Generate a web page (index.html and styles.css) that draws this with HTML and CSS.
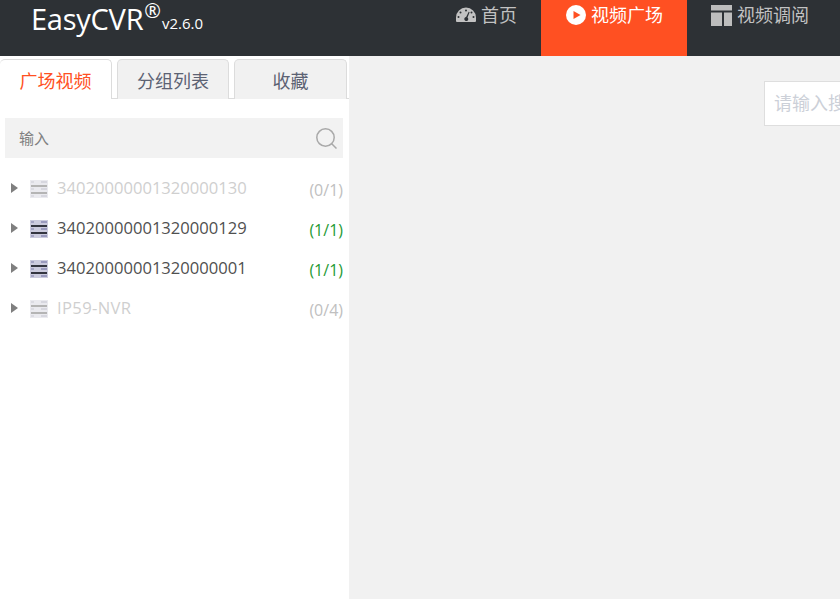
FILE: index.html
```html
<!DOCTYPE html>
<html lang="zh-CN">
<head>
<meta charset="utf-8">
<title>EasyCVR</title>
<link rel="stylesheet" href="styles.css">
</head>
<body>
<svg class="defs" width="0" height="0" aria-hidden="true">
  <symbol id="server" viewBox="0 0 18 18">
    <rect width="18" height="18" fill="currentColor" opacity=".35"/>
    <rect x="1" y="1.500" width="3" height="1" fill="currentColor" opacity=".8"/>
    <rect x="11" y="1.500" width="6" height="1" fill="currentColor"/>
    <rect x="1" y="5" width="16" height="2" fill="var(--bar)"/>
    <rect x="1" y="8.500" width="3" height="1" fill="currentColor" opacity=".8"/>
    <rect x="11" y="8.500" width="6" height="1" fill="currentColor"/>
    <rect x="1" y="12" width="16" height="2" fill="var(--bar)"/>
    <rect x="1" y="15.500" width="3" height="1" fill="currentColor" opacity=".8"/>
    <rect x="11" y="15.500" width="6" height="1" fill="currentColor"/>
  </symbol>
</svg>
<header class="topbar">
  <div class="brand"><span class="brand-name">EasyCVR</span><sup class="brand-reg">®</sup><span class="brand-ver">v2.6.0</span></div>
  <nav class="nav">
    <a class="nav-item">
      <svg class="nav-icon" width="20" height="18" viewBox="0 0 20 18"><path fill="#c2c2c2" fill-rule="evenodd" d="M10 2.500A10 10 0 0 0 0 12.500V16a1 1 0 0 0 1 1h18a1 1 0 0 0 1-1v-3.500A10 10 0 0 0 10 2.500zM10 4.500a1 1 0 1 1 0 2 1 1 0 0 1 0-2zM4.500 6.500a1 1 0 1 1 0 2 1 1 0 0 1 0-2zM15.500 6.500a1 1 0 1 1 0 2 1 1 0 0 1 0-2zM2.500 11a1 1 0 1 1 0 2 1 1 0 0 1 0-2zM17.500 11a1 1 0 1 1 0 2 1 1 0 0 1 0-2zM12.700 6.800l.9.500-2.100 5.200a2 2 0 1 1-1.400-.4z"/></svg>
      首页
    </a>
    <a class="nav-item nav-active">
      <svg class="nav-icon" width="20" height="20" viewBox="0 0 20 20"><circle cx="10" cy="10" r="10" fill="#fff"/><path fill="#ff5022" d="M7.500 6v8l7-4z"/></svg>
      视频广场
    </a>
    <a class="nav-item">
      <svg class="nav-icon" width="21" height="21" viewBox="0 0 21 21"><path fill="#bdbdbd" d="M0 0h21v5.500H0zM0 7.500h11V21H0zM13 7.500h8V21h-8z"/></svg>
      视频调阅
    </a>
  </nav>
</header>
<main class="layout">
  <aside class="sidebar">
    <div class="tabs">
      <div class="tab tab-active">广场视频</div>
      <div class="tab">分组列表</div>
      <div class="tab tab-last">收藏</div>
    </div>
    <div class="search">
      <span class="search-text">输入</span>
      <svg width="21" height="21" viewBox="0 0 21 21" fill="none" stroke="#a9a9a9" stroke-width="1.500"><circle cx="9.500" cy="9.500" r="8.700"/><path d="m15.700 15.700 4.800 4.800"/></svg>
    </div>
    <ul class="tree">
      <li class="node node-off"><i class="caret"></i><svg class="server"><use href="#server"/></svg><span class="node-name">34020000001320000130</span><span class="node-count">(0/1)</span></li>
      <li class="node node-on"><i class="caret"></i><svg class="server"><use href="#server"/></svg><span class="node-name">34020000001320000129</span><span class="node-count">(1/1)</span></li>
      <li class="node node-on"><i class="caret"></i><svg class="server"><use href="#server"/></svg><span class="node-name">34020000001320000001</span><span class="node-count">(1/1)</span></li>
      <li class="node node-off"><i class="caret"></i><svg class="server"><use href="#server"/></svg><span class="node-name node-name-wide">IP59-NVR</span><span class="node-count">(0/4)</span></li>
    </ul>
  </aside>
  <section class="content">
    <div class="query">请输入搜索内容</div>
  </section>
</main>
</body>
</html>
```
FILE: styles.css
```css
* { box-sizing: border-box; }
html, body { margin: 0; height: 100%; overflow: hidden; }
body {
  display: flex;
  flex-direction: column;
  font-family: "Open Sans", "Noto Sans CJK SC", sans-serif;
  background: #f1f1f1;
}
.defs { position: absolute; }
.topbar {
  flex: 0 0 56px;
  display: flex;
  background: #2d3135;
  color: #fff;
}
.brand { margin-left: 31px; white-space: nowrap; height: 56px; line-height: 37px; }
.brand-name { font-size: 29px; letter-spacing: -.25px; }
.brand-reg { font-size: 20px; line-height: 0; vertical-align: 12px; margin-left: 1px; }
.brand-ver { font-size: 15px; margin-left: 1px; vertical-align: 1px; }
.nav { margin-left: auto; margin-right: 7px; display: flex; }
.nav-item {
  display: flex;
  align-items: flex-start;
  gap: 5px;
  padding: 0 24px;
  font-size: 18px;
  line-height: 30px;
  color: #c2c2c2;
}
.nav-active { background: #ff5022; color: #fff; padding-left: 25px; }
.nav-icon { margin-top: 5px; flex: none; }
.layout { flex: 1; display: flex; min-height: 0; }
.sidebar { flex: 0 0 349px; min-width: 0; background: #fff; }
.tabs {
  display: flex;
  gap: 5px;
  height: 43px;
  padding-top: 3px;
  padding-right: 2px;
  border-bottom: 1px solid #dcdcdc;
}
.tab {
  width: 112px;
  height: 40px;
  border: 1px solid #dcdcdc;
  border-bottom: 0;
  border-radius: 5px 5px 0 0;
  background: #f1f1f1;
  color: #5c6273;
  font-size: 18px;
  line-height: 42px;
  text-align: center;
}
.tab-active {
  background: #fff;
  color: #ff5022;
  border-left: 0;
}
.tab-last { width: 113px; }
.search {
  margin: 19px 6px 0 5px;
  height: 40px;
  background: #f2f2f2;
  display: flex;
  align-items: center;
  justify-content: space-between;
  padding: 0 6px 0 14px;
}
.search-text { font-size: 15px; color: #808080; padding-bottom: 2px; }
.tree { list-style: none; margin: 10px 6px 0 0; padding: 0; }
.node { display: flex; align-items: center; height: 40px; font-size: 16.600px; }
.caret {
  width: 0;
  height: 0;
  margin-left: 11px;
  border-left: 7px solid #7f7f7f;
  border-top: 5.500px solid transparent;
  border-bottom: 5.500px solid transparent;
}
.server { width: 18px; height: 18px; margin: 2px 0 0 12px; flex: none; }
.node-name { margin: 0 0 2px 9px; }
.node-name-wide { letter-spacing: .35px; }
.node-count { margin-left: auto; font-size: 16px; padding-top: 3px; }
.node-off { color: #cfcfcf; --bar: #b4b4b4; }
.node-off .server { color: #c4c4d0; }
.node-off .node-count { color: #c0c0c0; }
.node-on { color: #505050; --bar: #33353f; }
.node-on .server { color: #6a6a9e; }
.node-on .node-count { color: #1f9a35; }
.content { flex: 1; min-width: 0; padding: 25px 0 0 415px; overflow: hidden; }
.query {
  width: 300px;
  height: 45px;
  background: #fff;
  border: 1px solid #dedede;
  padding-left: 9px;
  font-size: 18px;
  line-height: 42px;
  color: #ccd0d8;
  white-space: nowrap;
}
```
